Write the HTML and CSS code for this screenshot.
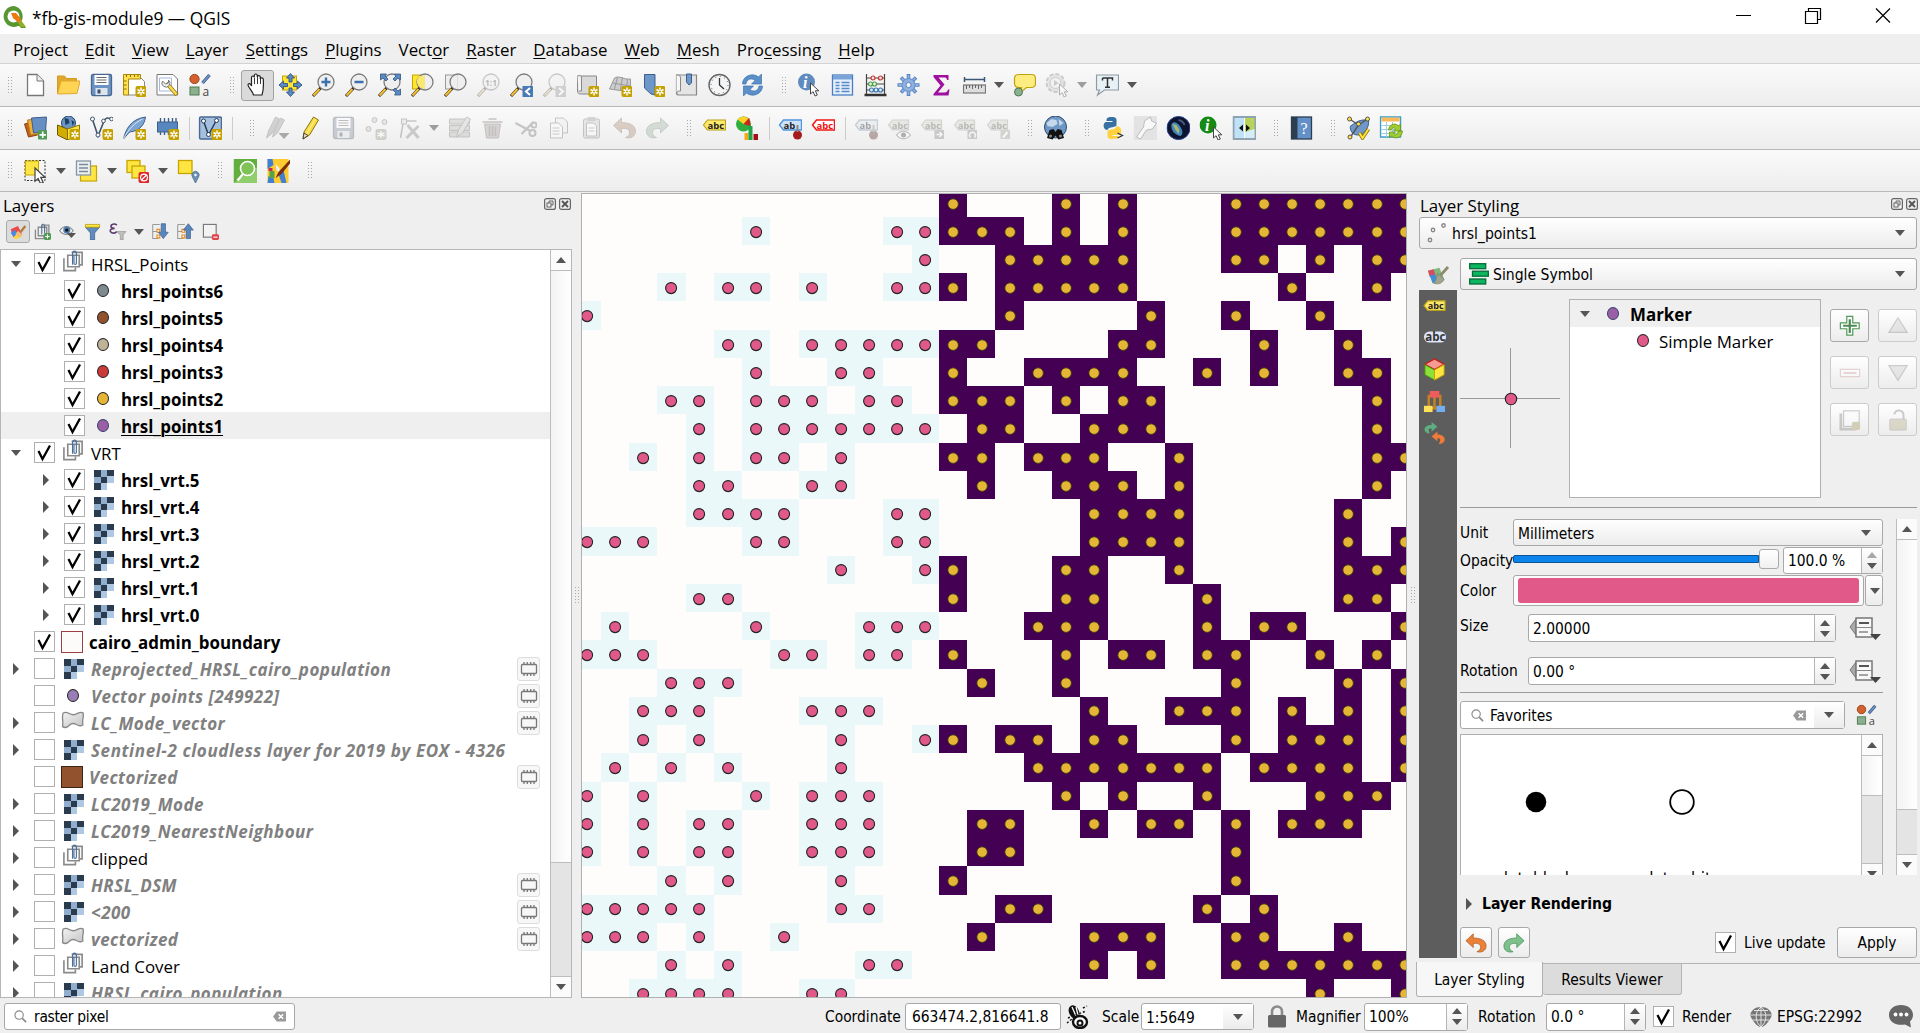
FILE: index.html
```html
<!DOCTYPE html>
<html lang="en">
<head>
<meta charset="utf-8">
<title>*fb-gis-module9 — QGIS</title>
<link rel="stylesheet" href="styles.css">
</head>
<body>
<svg class="defs" aria-hidden="true">
<defs>
<linearGradient id="gPoly" x1="0" y1="0" x2="1" y2="1"><stop offset="0" stop-color="#f2f2f2"/><stop offset="1" stop-color="#c4c4c4"/></linearGradient>
<g id="badge"><rect x="13" y="13" width="11" height="11" rx="2" fill="#c4a000"/><path d="M18.5 14.5v8M15 16.5l7 4M22 16.5l-7 4" stroke="#fff" stroke-width="1.5"/><circle cx="18.5" cy="18.5" r="1" fill="#c4a000"/></g>
<g id="lens"><path d="M9.500 14.500L1.500 23" stroke="#222" stroke-width="3"/><path d="M8 16L2 22.500" stroke="#fbc02d" stroke-width="2"/><circle cx="14.500" cy="9" r="8" fill="#eee" fill-opacity=".8" stroke="#7c7c7c" stroke-width="1.300"/></g>
<g id="cursor"><path d="M0 0v11l2.600-2.300 2 4.300 2.200-1-2-4.200h3.500z" fill="#fff" stroke="#444" stroke-width="1"/></g>
<g id="tag"><path d="M1 9l4-5h18v10H5z" fill="currentColor" stroke="#b5a018" stroke-width="1.200"/></g>
<symbol id="new" viewBox="0 0 24 24"><path d="M4 1.500h9.500L20 8v14.500H4z" fill="#fff" stroke="#777" stroke-width="1.300"/><path d="M13.500 1.500V8H20" fill="#eee" stroke="#777"/></symbol>
<symbol id="open" viewBox="0 0 24 24"><path d="M1 20V3h7l2 2.500h10V9" fill="#e0a92e" stroke="#d39b22"/><path d="M1 21L4.500 8h19L20.500 20.500z" fill="#ffd452" stroke="#e0a92e"/></symbol>
<symbol id="save" viewBox="0 0 24 24"><rect x="2" y="1.500" width="20" height="21" rx="1.500" fill="#6b93c4" stroke="#49688e" stroke-width="1.300"/><rect x="5" y="2" width="14" height="10" fill="#fff"/><path d="M7 4.500h10M7 7h10M7 9.500h10" stroke="#666" stroke-width="1.100"/><rect x="6" y="15" width="12" height="7" fill="#dce4ee"/><rect x="8" y="16.500" width="3" height="4" fill="#3a5070"/></symbol>
<symbol id="layout" viewBox="0 0 24 24"><path d="M5 4h12.500L22 8.500V22H5z" fill="#fff" stroke="#888"/><path d="M1 1.500h17v4.500H6V22H1z" fill="#ffe04d" stroke="#a8870c"/><path d="M4 2v2M8 2v2M12 2v2M15.500 2v2M1.500 8H4M1.500 12H4M1.500 16H4" stroke="#8c6d00"/><use href="#badge"/></symbol>
<symbol id="layman" viewBox="0 0 24 24"><path d="M1.500 1.500h16l4.500 4.500v16H1.500z" fill="#fff" stroke="#777"/><path d="M4 5h12v13H4z" fill="none" stroke="#a3b8dc"/><path d="M11 10l10.500 12" stroke="#8d7310" stroke-width="4"/><path d="M12 11l9 10.500" stroke="#fbdb4e" stroke-width="2.500"/><path d="M7 8l3 3 3-1 0-3a4 4 0 1 1-6 1z" fill="#eee" stroke="#777"/></symbol>
<symbol id="style" viewBox="0 0 24 24"><circle cx="6" cy="6" r="4.600" fill="#d4602f" stroke="#99431c"/><path d="M14 10l7-8" stroke="#3f6190" stroke-width="3.400"/><path d="M14 10l7-8" stroke="#7397c7" stroke-width="1.500"/><rect x="1.500" y="14" width="9" height="8" fill="#8bb08f" stroke="#4e7a53"/><text x="14" y="22.500" font-size="12" font-family="Open Sans, sans-serif" fill="#444">a</text></symbol>
<symbol id="hand" viewBox="0 0 24 24"><path d="M8 22c-1-4-5-7-5.500-10C2.500 10 5 10 6 13V4.500c0-2 2.600-2 2.800 0V2.500c.2-2 2.800-2 3 0V4c.3-2 2.800-1.700 3 0v2c.4-1.800 2.800-1.500 3 .3C18 13 18.500 16 16.500 22z" fill="#fff" stroke="#222" stroke-width="1.200"/><path d="M9 5v6M12 4v7M15 5v6" stroke="#222" stroke-width=".9"/></symbol>
<symbol id="pan" viewBox="0 0 24 24"><rect x="4" y="3" width="14" height="14" fill="#ffe630" stroke="#c7a500"/><path d="M12 .5l4 4.500h-2.500v4h-3V5H8zM12 23.500l4-4.500h-2.500v-4h-3v4H8zM.5 12L5 8v2.500h4v3H5V16zM23.500 12L19 8v2.500h-4v3h4V16z" fill="#5b8ac4" stroke="#31567f" stroke-width=".9"/></symbol>
<symbol id="zin" viewBox="0 0 24 24"><use href="#lens"/><path d="M14.500 4.500v9M10 9h9" stroke="#3d70ae" stroke-width="2.400"/></symbol>
<symbol id="zout" viewBox="0 0 24 24"><use href="#lens"/><path d="M10 9h9" stroke="#3d70ae" stroke-width="2.400"/></symbol>
<symbol id="zfull" viewBox="0 0 24 24"><use href="#lens"/><path d="M3 1h6L7.500 3l3 3-2 2-3-3L3 7zM23 1h-6l1.500 2-3 3 2 2 3-3L23 7zM23 22h-6l1.500-2-3-3 2-2 3 3L23 16z" fill="#5b8ac4" stroke="#31567f" stroke-width=".8"/></symbol>
<symbol id="zsel" viewBox="0 0 24 24"><rect x="2" y="2" width="12" height="14" fill="#ffe630" stroke="#c7a500"/><use href="#lens"/><path d="M9 3h5v12h-3a7 7 0 0 1-2-12z" fill="#fbe96c"/></symbol>
<symbol id="zlay" viewBox="0 0 24 24"><rect x="2" y="2" width="12" height="14" fill="#eee" stroke="#999"/><use href="#lens"/></symbol>
<symbol id="znat" viewBox="0 0 24 24"><use href="#lens"/><text x="8.500" y="12.500" font-size="8.500" font-weight="700" font-family="Open Sans, sans-serif" fill="#555">1:1</text></symbol>
<symbol id="zlast" viewBox="0 0 24 24"><use href="#lens"/><rect x="13" y="13" width="11" height="11" fill="#4a7ab5"/><path d="M20.500 15l-4 3.500 4 3.500" fill="none" stroke="#fff" stroke-width="2"/></symbol>
<symbol id="znext" viewBox="0 0 24 24"><use href="#lens"/><rect x="13" y="13" width="11" height="11" fill="#999"/><path d="M16.500 15l4 3.500-4 3.500" fill="none" stroke="#fff" stroke-width="2"/></symbol>
<symbol id="map" viewBox="0 0 24 24"><path d="M2 3h19v18H5c-3 0-3-2-3-3z" fill="#d9d9d9" stroke="#888"/><path d="M2 3c3-1 4 0 4 2v13H3" fill="#f3f3f3" stroke="#888"/><use href="#badge"/></symbol>
<symbol id="map3d" viewBox="0 0 24 24"><path d="M6 5c5-3 9 2 16 1v13L1 16z" fill="#ccc" stroke="#999"/><path d="M4 10l18 3M9 4L6 16M14 4l-2 13M19 6l-1 12" stroke="#999" fill="none"/><use href="#badge"/></symbol>
<symbol id="bkm" viewBox="0 0 24 24"><path d="M3 1.500h10.500V22l-4-1L3 15z" fill="#6d97c9" stroke="#3c5f8c"/><use href="#badge"/></symbol>
<symbol id="bkms" viewBox="0 0 24 24"><path d="M2 2h20v20H4c-2 0-2-1-2-3z" fill="#e4e4e4" stroke="#888" stroke-width="1.200"/><path d="M2 2c3 0 4 1 4 3v13c-2 0-4 0-4 3" fill="#f7f7f7" stroke="#888"/><path d="M12 1h5v9l-2.500 2L12 9z" fill="#6d97c9" stroke="#3c5f8c"/></symbol>
<symbol id="clock" viewBox="0 0 24 24"><circle cx="12" cy="12" r="10.500" fill="#f3f5f6" stroke="#666" stroke-width="1.400"/><path d="M12 5v7l4.500 4" fill="none" stroke="#333" stroke-width="1.300"/><circle cx="12" cy="12" r="8.500" fill="none" stroke="#555" stroke-dasharray="1 3.450"/></symbol>
<symbol id="refresh" viewBox="0 0 24 24"><path d="M2 11C2 3 12-1 18 4l3-3v10H11l3.500-3.500C11 4.500 6 6 5.500 11z" fill="#5b8fca" stroke="#4073ad" stroke-width=".7"/><path d="M22 13c0 8-10 12-16 7l-3 3V13h10l-3.500 3.500C13 19.500 18 18 18.500 13z" fill="#5b8fca" stroke="#4073ad" stroke-width=".7"/></symbol>
<symbol id="ident" viewBox="0 0 24 24"><circle cx="9" cy="9" r="8.500" fill="#5f8bbf"/><text x="5.500" y="15" font-size="16" font-style="italic" font-weight="700" font-family="Liberation Serif, serif" fill="#fff">i</text><use href="#cursor" transform="translate(13 10)"/></symbol>
<symbol id="table" viewBox="0 0 24 24"><rect x="2" y="2" width="20" height="20" fill="#e6effa" stroke="#4b7fc0" stroke-width="1.300"/><rect x="2.500" y="2.500" width="19" height="4" fill="#7ba5d8"/><path d="M5 9.500h4M5 12.500h4M5 15.500h4M5 18.500h4M11 9.500h8M11 12.500h8M11 15.500h8M11 18.500h8" stroke="#5a8aca" stroke-width="1.300"/></symbol>
<symbol id="abacus" viewBox="0 0 24 24"><path d="M3 1v20M21 1v20M3 5h18M3 11h18M3 17h18" stroke="#444" stroke-width="1.200"/><path d="M1 22h22" stroke="#333" stroke-width="2.500"/><g fill="#fbe3e3" stroke="#c3342c" stroke-width="1.200"><circle cx="9.500" cy="5" r="2"/><circle cx="17" cy="5" r="2"/></g><g fill="#e5f5e3" stroke="#4a9a46" stroke-width="1.200"><circle cx="7" cy="11" r="2"/><circle cx="11" cy="11" r="2"/></g><g fill="#e3edf8" stroke="#3a74b0" stroke-width="1.200"><circle cx="8" cy="17" r="2"/><circle cx="12.500" cy="17" r="2"/><circle cx="17" cy="17" r="2"/></g></symbol>
<symbol id="gear" viewBox="0 0 24 24"><path d="M12 1v22M1 12h22M4.500 4.500l15 15M19.500 4.500l-15 15" stroke="#5584c4" stroke-width="3.600"/><path d="M12 2v20M2 12h20M5.200 5.200l13.600 13.600M18.800 5.200L5.200 18.800" stroke="#8fb1de" stroke-width="1.800"/><circle cx="12" cy="12" r="6.500" fill="#8fb1de" stroke="#6b95d0" stroke-width="1.200"/><circle cx="12" cy="12" r="2.600" fill="#f3f3f3" stroke="#5584c4"/></symbol>
<symbol id="sigma" viewBox="0 0 24 24"><path d="M4 2h15v5h-1.500c-.3-2-1-2.500-3-2.500H9l6 7-6.500 8H15c2 0 3-1 3.500-3H20l-1 6H4v-1.500l7-8.500-7-8.500z" fill="#a010a0"/></symbol>
<symbol id="ruler" viewBox="0 0 24 24"><path d="M2 6.500h20M2 4v5M22 4v5" stroke="#3b5676" stroke-width="1.500"/><rect x="1" y="12" width="22" height="8" fill="#ddd" stroke="#777" stroke-width="1.200"/><path d="M4 12v4M7 12v3M10 12v4M13 12v3M16 12v4M19 12v3" stroke="#666"/></symbol>
<symbol id="tip" viewBox="0 0 24 24"><path d="M6 1.500h13c2.500 0 4 1.500 4 4v5c0 2-1.500 4-4 4h-5l-6 5 1-5H6c-2.500 0-4-2-4-4v-5c0-2.500 1.500-4 4-4z" fill="#fdec80" stroke="#bfa20f" stroke-width="1.200"/><circle cx="6" cy="19" r="4" fill="#8bb08f" stroke="#4e7a53"/></symbol>
<symbol id="action" viewBox="0 0 24 24"><circle cx="10" cy="10" r="9" fill="#ccc" stroke="#888" stroke-width="2" stroke-dasharray="4 2"/><circle cx="10" cy="10" r="5.500" fill="#eee" stroke="#888"/><path d="M8.500 7l4.500 3-4.500 3z" fill="#888"/><use href="#cursor" transform="translate(14 11)"/></symbol>
<symbol id="text" viewBox="0 0 24 24"><path d="M1 2h22v15H9l-7 5 2-5H1z" fill="#e8f1f5" stroke="#8c9ba3" stroke-width="1.200"/><path d="M7 5h10v2.500M7 7.500V5M12 5v9M9.500 14.200h5" fill="none" stroke="#333" stroke-width="1.500"/></symbol>
<symbol id="dsm" viewBox="0 0 24 24"><path d="M1 8l10-3 3 14-9 2z" fill="#c0601b" stroke="#8b4210"/><path d="M4 4l10-1 2 15-9 1z" fill="#f1b13b" stroke="#b67a13"/><path d="M8 2l15-1 -1 15-12 1z" fill="#668fc4" stroke="#3c5f8c"/><rect x="14.500" y="14" width="9.500" height="9.500" rx="1" fill="#4f9a55"/><path d="M19.200 15.500v6.500M16 18.800h6.500" stroke="#fff" stroke-width="1.700"/></symbol>
<symbol id="gpkg" viewBox="0 0 24 24"><circle cx="12" cy="7" r="7" fill="#6d95c4" stroke="#28476d"/><path d="M8 2l4 1 1 4-4 2zM15 4l3 2-2 4z" fill="#1e3d63"/><path d="M1 9l10 4v11L1 19z" fill="#d2ac00" stroke="#6c5900"/><path d="M11 13l12-4v10l-12 5z" fill="#ffe541" stroke="#8a7300"/><use href="#badge"/></symbol>
<symbol id="shp" viewBox="0 0 24 24"><path d="M3 3.500L8.500 20 15 4c2-3 4-2 7-1" fill="none" stroke="#41566b" stroke-width="1.600"/><g fill="#fff" stroke="#41566b"><circle cx="3" cy="3" r="2"/><circle cx="14" cy="5" r="1.800"/><circle cx="22" cy="3" r="1.800"/><circle cx="8.500" cy="19" r="2"/></g><use href="#badge"/></symbol>
<symbol id="feather" viewBox="0 0 24 24"><path d="M1 23C3 14 8 3 23 1c-1 7-5 14-16 15z" fill="#7fa6d2" stroke="#3c5f8c"/><path d="M1 23C6 13 12 7 20 3" fill="none" stroke="#dbe7f4"/><use href="#badge"/></symbol>
<symbol id="chip" viewBox="0 0 24 24"><path d="M5 2v17M9 2v17M13 2v17M17 2v17M20.500 2v17" stroke="#3c5f8c" stroke-width="1.400"/><rect x="2" y="6" width="20" height="10" fill="#5887bf" stroke="#3c5f8c"/><use href="#badge"/></symbol>
<symbol id="virt" viewBox="0 0 24 24"><rect x="1" y="1" width="22" height="22" rx="1.500" fill="#a5bfde" stroke="#4a6a92" stroke-width="1.500"/><path d="M5 5l5 14 8-15" fill="none" stroke="#253c57" stroke-width="1.500"/><g fill="#fff" stroke="#253c57"><circle cx="5" cy="5" r="2"/><circle cx="18" cy="4.500" r="2"/><circle cx="10" cy="18.500" r="2"/></g><use href="#badge"/></symbol>
<symbol id="pens" viewBox="0 0 24 24"><path d="M1 22l2-7L10 1l4 2-7 14zM7 21l2-7 6-12 4 2-7 13z" fill="#999" stroke="#777"/><path d="M13 17h11l-5.500 6z" fill="#333"/></symbol>
<symbol id="pen" viewBox="0 0 24 24"><path d="M4.500 23l1-7L15 1l5 3-9 15z" fill="#f8dc45" stroke="#8a7310"/><path d="M17 3L8 18" stroke="#fff59d"/><path d="M4.500 23l1-6 4 2.500z" fill="#f1dfb4" stroke="#444"/></symbol>
<symbol id="pts" viewBox="0 0 24 24"><g fill="#ccc" stroke="#777"><circle cx="4" cy="13" r="2.500"/><circle cx="10" cy="4" r="2.500"/><circle cx="20" cy="6" r="2.500"/></g><rect x="11" y="13" width="11" height="11" rx="2" fill="#a39a72"/><path d="M16.500 15v7M13 17l7 3M20 17l-7 3" stroke="#fff" stroke-width="1.400"/></symbol>
<symbol id="vert" viewBox="0 0 24 24"><path d="M3 22L6 5h13" stroke="#777" stroke-width="1.500" fill="none"/><path d="M10 9l11 13M21 10L9 22" stroke="#888" stroke-width="3" fill="none"/><rect x="4" y="3" width="5" height="5" fill="#ddd" stroke="#777"/></symbol>
<symbol id="attr" viewBox="0 0 24 24"><path d="M2 3h20v5H2zM2 9.500h20v5H2zM2 16h20v5H2z" fill="#b9bda4" stroke="#777"/><path d="M9 21l2-7L19 1l4 2-8 14z" fill="#ccc" stroke="#777"/></symbol>
<symbol id="trash" viewBox="0 0 24 24"><path d="M4 8h16l-2 14H6z" fill="#c79b9b" stroke="#8a6a6a"/><path d="M2 6h20M8 3h8M9 10v10M12 10v10M15 10v10" stroke="#8a6a6a" stroke-width="1.600"/></symbol>
<symbol id="cut" viewBox="0 0 24 24"><path d="M2 7l15 8M8 18l12-12" stroke="#777" stroke-width="2.200"/><circle cx="19" cy="17" r="3" fill="none" stroke="#777" stroke-width="2"/><circle cx="20.500" cy="9" r="2.600" fill="none" stroke="#777" stroke-width="2"/></symbol>
<symbol id="copy" viewBox="0 0 24 24"><path d="M9 2h8l4 4v11H9z" fill="#eee" stroke="#777"/><path d="M4 7h8l4 4v11H4z" fill="#fff" stroke="#777"/><path d="M6 12h7M6 15h7M6 18h7" stroke="#888"/></symbol>
<symbol id="paste" viewBox="0 0 24 24"><rect x="4" y="3" width="16" height="19" rx="1.500" fill="#ccc" stroke="#777"/><path d="M7 7h7l3 3v10H7z" fill="#fff" stroke="#777"/><rect x="8" y="1" width="8" height="4" fill="#999"/><path d="M9 12h6M9 15h6" stroke="#888"/></symbol>
<symbol id="undo" viewBox="0 0 24 24"><path d="M9 2L1 9.500l8 7.500v-4.500c6-.5 8 1 8 4.500 0 2-1.500 3.500-4 4.500 6 1.500 10-1.500 10-6.500 0-5-5-8.500-14-8.500z" fill="currentColor" stroke="#a8602c" stroke-width=".8"/></symbol>
<symbol id="redo" viewBox="0 0 24 24"><path d="M15 2l8 7.500-8 7.500v-4.500c-6-.5-8 1-8 4.500 0 2 1.500 3.500 4 4.500-6 1.500-10-1.500-10-6.500 0-5 5-8.500 14-8.500z" fill="currentColor" stroke="#3d8f55" stroke-width=".8"/></symbol>
<symbol id="lab" viewBox="0 0 24 24"><use href="#tag" color="#ffe96a"/><text x="5" y="12.500" font-size="9.500" font-weight="700" font-family="Open Sans, sans-serif" fill="#222">abc</text></symbol>
<symbol id="diag" viewBox="0 0 24 24"><circle cx="8" cy="8" r="7.500" fill="#2fae3f"/><path d="M8 8V.5l6 2L15 10z" fill="#c9251c"/><path d="M8 8L2 3.500C4 1 9-.5 13 2.500z" fill="#ffd42a"/><path d="M9 17h4v7H9z" fill="#f5a81c"/><path d="M13 10h4v14h-4z" fill="#1ea64a"/><path d="M18 18h4.500v6H18z" fill="#a31212"/></symbol>
<symbol id="labpin" viewBox="0 0 24 24"><path d="M1 9l4-5h18v10H5z" fill="#cfe3f8" stroke="#5096dd" stroke-width="1.400"/><text x="5" y="12.500" font-size="9.500" font-weight="700" font-family="Open Sans, sans-serif" fill="#222">ab</text><circle cx="19" cy="19" r="4.500" fill="#a61b1b"/><path d="M19 16V9" stroke="#888" stroke-width="2"/></symbol>
<symbol id="labred" viewBox="0 0 24 24"><path d="M1 9l4-5h18v10H5z" fill="#fff" stroke="#f01818" stroke-width="1.500"/><text x="5" y="12.500" font-size="9.500" font-weight="700" font-family="Open Sans, sans-serif" fill="#e11">abc</text></symbol>
<symbol id="labx" viewBox="0 0 24 24"><path d="M1 9l4-5h16v10H5z" fill="#d8d3ac" stroke="#999" stroke-width="1.200"/><text x="4.500" y="12.500" font-size="9" font-weight="700" font-family="Open Sans, sans-serif" fill="#555">abc</text><rect x="14" y="14" width="9.500" height="9" fill="#888"/><path d="M16 18.500h5M19 16l2.500 2.500L19 21" fill="none" stroke="#fff" stroke-width="1.300"/></symbol>
<symbol id="labeye" viewBox="0 0 24 24"><path d="M1 9l4-5h16v10H5z" fill="#d8d3ac" stroke="#999" stroke-width="1.200"/><text x="4.500" y="12.500" font-size="9" font-weight="700" font-family="Open Sans, sans-serif" fill="#555">abc</text><path d="M9 19c4-5 10-5 14 0-4 5-10 5-14 0z" fill="#fff" stroke="#666" stroke-width="1.200"/><circle cx="16" cy="19" r="2.500" fill="#444"/></symbol>
<symbol id="labrot" viewBox="0 0 24 24"><path d="M1 9l4-5h16v10H5z" fill="#d8d3ac" stroke="#999" stroke-width="1.200"/><text x="4.500" y="12.500" font-size="9" font-weight="700" font-family="Open Sans, sans-serif" fill="#555">abc</text><rect x="14" y="14" width="9.500" height="9" fill="#888"/><path d="M17 21.500a3 3 0 1 1 4 0" fill="none" stroke="#fff" stroke-width="1.500"/></symbol>
<symbol id="labedit" viewBox="0 0 24 24"><path d="M1 9l4-5h16v10H5z" fill="#d8d3ac" stroke="#999" stroke-width="1.200"/><text x="4.500" y="12.500" font-size="9" font-weight="700" font-family="Open Sans, sans-serif" fill="#555">abc</text><rect x="14" y="14" width="9.500" height="9" fill="#aaa27a"/><path d="M16.500 21.500l4.500-5.500" stroke="#fff" stroke-width="2"/></symbol>
<symbol id="binoc" viewBox="0 0 24 24"><circle cx="12" cy="11" r="11" fill="#6f97c4" stroke="#2d4c70"/><path d="M3 7l5-4 5 1 1 4-5 3-5-1zM15 3l5 4-4 3z" fill="#c5d8ec"/><path d="M3.500 22l2.500-8 4-1 2 3 2-3 4 1 2.500 8-5.500 1.500-3-4-3 4z" fill="#111"/><circle cx="7" cy="20" r="1.500" fill="#888"/><circle cx="17" cy="20" r="1.500" fill="#888"/></symbol>
<symbol id="py" viewBox="0 0 24 24"><path d="M11 1c6 0 5 2 5 8 0 3-8 1-9 5-5 0-5-8-1-8h6V5H6c0-3 1-4 5-4z" fill="#3771a2"/><path d="M12 23c-6 0-5-2-5-7 0-4 9-1 9-6 6 0 6 9 2 9h-6v1h6c0 2-1 3-6 3z" fill="#ffd13e"/><path d="M17 17l5 2.500-5 2.500" fill="none" stroke="#333" stroke-width="1.300"/></symbol>
<symbol id="plug" viewBox="0 0 24 24"><rect width="24" height="24" fill="#e3e3e3"/><path d="M3 21l7-10 1-6 6-4 1 4 5 2-4 6-6 1-6 9z" fill="#f8f8f8" stroke="#bbb"/></symbol>
<symbol id="earth" viewBox="0 0 24 24"><circle cx="12" cy="12" r="11.500" fill="#0d1430" stroke="#27408f" stroke-width="1"/><path d="M5 8c3-4 7 0 9 3s3 7 0 9C8 19 4 14 5 8z" fill="#4384bb"/><path d="M6 8l4 1 3 5-1 4-3-4z" fill="#a8b66e"/><path d="M12 4a8 8 0 0 1 6 5" fill="none" stroke="#4b5577" stroke-width="2"/></symbol>
<symbol id="ginfo" viewBox="0 0 24 24"><circle cx="8.500" cy="9" r="8.500" fill="#158a17"/><text x="5.500" y="15" font-size="16" font-style="italic" font-weight="700" font-family="Liberation Serif, serif" fill="#fff">i</text><use href="#cursor" transform="translate(14 11)"/></symbol>
<symbol id="swipe" viewBox="0 0 24 24"><rect x="0" y="0" width="24" height="24" fill="#8fa3b1"/><rect x="2" y="2" width="10" height="20" fill="#bfe2f8"/><rect x="12" y="2" width="10" height="20" fill="#b9d258"/><path d="M12 16l10-3v9H12z" fill="#d4edf8"/><path d="M12 2v20" stroke="#fff"/><path d="M10.500 8.500L6.500 12l4 3.500zM13.500 8.500l4 3.500-4 3.500z" fill="#111"/></symbol>
<symbol id="help" viewBox="0 0 24 24"><rect x="2" y="1" width="20" height="22" fill="#6490c8" stroke="#2c3e50" stroke-width="1.300"/><rect x="2" y="1" width="6" height="22" fill="#2c3e50"/><text x="11" y="18" font-size="16" font-family="Liberation Serif, serif" fill="#fff">?</text></symbol>
<symbol id="topo" viewBox="0 0 24 24"><path d="M4 10c4-2 7-7 18-6 1 6-3 15-11 15C6 19 3 14 4 10z" fill="#6f98c9" stroke="#3b5f8c"/><path d="M3 3l9 6 9-6M12 9L4 21" stroke="#555" fill="none" stroke-width="1.400"/><g fill="#ffe541" stroke="#555"><circle cx="3" cy="3" r="2"/><circle cx="21" cy="3" r="2"/><circle cx="12" cy="8" r="2"/><circle cx="3.500" cy="21" r="2"/></g><path d="M13 17l3 5 6-9" fill="none" stroke="#8a7300" stroke-width="3.500"/><path d="M13 17l3 5 6-9" fill="none" stroke="#ffe541" stroke-width="1.800"/></symbol>
<symbol id="tref" viewBox="0 0 24 24"><rect x="1" y="1" width="20" height="20" fill="#fff" stroke="#3c9fc8" stroke-width="1.500"/><rect x="2" y="1.500" width="18" height="4" fill="#f9b958"/><path d="M2 9.500h18M2 13.500h18M2 17.500h18M7 6v15M13 6v15" stroke="#9dd0e6"/><path d="M9 14c1-7 8-7 10-4l2-2v7h-7l2-2c-2-2-4-1-4 1zM23 15c-1 8-8 8-11 5l-2 2v-6h6l-2 2c2 2 4 0 5-3z" fill="#9fce2f" stroke="#679315" stroke-width=".8"/></symbol>
<symbol id="sel" viewBox="0 0 24 24"><rect x="1.500" y="1.500" width="20" height="20" fill="none" stroke="#333" stroke-dasharray="2 1.500"/><rect x="2" y="2" width="13" height="14" fill="#ffe541" stroke="#c7a500"/><use href="#cursor" transform="translate(11.500 9) scale(1.200)"/></symbol>
<symbol id="selform" viewBox="0 0 24 24"><rect x="6" y="7" width="16" height="15" fill="#ffe541" stroke="#c7a500" stroke-width="1.200"/><rect x="2" y="2" width="14" height="14" fill="#eceff1" stroke="#8497a5" stroke-width="1.300"/><path d="M4.500 5.500h9M4.500 9h9M4.500 12.500h9" stroke="#7b8b97" stroke-width="1.400"/></symbol>
<symbol id="desel" viewBox="0 0 24 24"><rect x="1.500" y="1.500" width="13" height="12" fill="#ffe541" stroke="#c7a500" stroke-width="1.300"/><rect x="6.500" y="7" width="13" height="12" fill="#ffe541" stroke="#c7a500" stroke-width="1.300"/><rect x="13" y="13" width="11" height="11" rx="2" fill="#dc2a2a"/><circle cx="18.500" cy="18.500" r="3.400" fill="none" stroke="#fff" stroke-width="1.200"/><path d="M16 21l5-5" stroke="#fff" stroke-width="1.200"/></symbol>
<symbol id="selloc" viewBox="0 0 24 24"><rect x="2" y="1.500" width="13.500" height="13" fill="#ffe541" stroke="#c7a500" stroke-width="1.300"/><path d="M19 24l-3-6a3.600 3.600 0 1 1 6 0z" fill="#6f93b5" stroke="#4a6b8c" stroke-width=".8"/><circle cx="19" cy="16" r="1.200" fill="#fff"/></symbol>
<symbol id="osmfind" viewBox="0 0 24 24"><rect width="24" height="24" fill="#62ae3f"/><path d="M0 24L24 8v16z" fill="#8fce6a"/><circle cx="14" cy="9.500" r="7" fill="#7fc255" stroke="#fff" stroke-width="1.600"/><path d="M9.500 15L4 21.500" stroke="#fff" stroke-width="2.400"/></symbol>
<symbol id="osm" viewBox="0 0 24 24"><rect x="1" width="21" height="24" fill="#ffcb2e"/><path d="M1 0h5l1 6-6 4zM12 15l5-4 3 13h-5zM2 17l5 2 1 5H1z" fill="#3f80d2"/><path d="M3 12h5v7H3z" fill="#56a545"/><path d="M2 9h4v3H2z" fill="#c22f5b"/><path d="M9 5l4 4v5l-3-3z" fill="#e8eef8"/><path d="M24 0L12 13l-3 6 6-4L24 4z" fill="#7c2d10"/></symbol>
<symbol id="brush" viewBox="0 0 24 24"><path d="M2 8l12-3 5 12c-4 5-9 4-12 4z" fill="#7fb87a"/><path d="M2 8l6-1.500 2 7-6 1z" fill="#d94b5f"/><path d="M4 13l6-1 1 7-4 2z" fill="#3d8fd8"/><path d="M12 11l7 6c-3 6-8 5-11 4 2-2 3-5 4-10z" fill="#9fa58e" stroke="#777b6b" stroke-width=".7"/><path d="M15 13l8-9" stroke="#8e8b70" stroke-width="3"/></symbol>
<symbol id="brushb" viewBox="0 0 24 24"><path d="M1 8l11-5 6 12c-4 6-10 6-13 5z" fill="#e84a4a"/><path d="M1 13l7-4 4 8-6 3z" fill="#3f8ae6"/><path d="M4 21l8-8 7 4c-5 6-11 6-15 4z" fill="#ffd43a"/><path d="M12 10l7 6-4 4-7-5z" fill="#f0bd80"/><path d="M16 12l7-9" stroke="#b47a38" stroke-width="3.500"/></symbol>
<symbol id="group" viewBox="0 0 24 24"><path d="M2 9v13h12v-3M6 6v12h12V6zM10 3h11v13h-3" fill="none" stroke="#8a8a8a" stroke-width="1.700"/><path d="M11 16V4c0-3 4-3 4 0v10c0 2-2.500 2-2.500 0V6" fill="none" stroke="#4a6f9c" stroke-width="1.200"/></symbol>
<symbol id="groupadd" viewBox="0 0 24 24"><path d="M2 9v13h12v-3M6 6v12h12V6zM10 3h11v13h-3" fill="none" stroke="#8a8a8a" stroke-width="1.900"/><path d="M11 16V4c0-3 4-3 4 0v10" fill="none" stroke="#3c5f8c" stroke-width="1.400"/><rect x="14" y="14" width="10" height="10" rx="2" fill="#4f9a55"/><path d="M19 16v6M16 19h6" stroke="#fff" stroke-width="1.500"/></symbol>
<symbol id="eye" viewBox="0 0 24 24"><path d="M1 11c5-8 14-8 19 0-5 7-14 7-19 0z" fill="#f5f5f5" stroke="#888" stroke-width="1.500"/><circle cx="11" cy="10" r="5" fill="#4f7fae"/><circle cx="11" cy="10" r="2.400" fill="#111"/><path d="M11 14h13l-6.500 7z" fill="#555"/></symbol>
<symbol id="filter" viewBox="0 0 24 24"><path d="M2 6h20l-7 8v10H9V14z" fill="#5f8bbf" stroke="#3c5f8c"/><path d="M2 2h20v4H2z" fill="#ffe541" stroke="#b09300"/></symbol>
<symbol id="eps" viewBox="0 0 24 24"><path d="M11 3C8 0 2 2 3 5c0 2 3 2.500 5 2.500C4 7.500 1 9 2 12c1 3 7 3 9 0" fill="none" stroke="#5e3a70" stroke-width="2.300"/><path d="M11 12h13l-4 5v7h-4v-7z" fill="#bdbdbd" stroke="#999"/></symbol>
<symbol id="expand" viewBox="0 0 24 24"><path d="M1 2h10M1 2v20h8M1 12h8" stroke="#999" fill="none" stroke-width="1.500"/><path d="M7 9h4v4H7zM7 17h4v4H7z" fill="#fff" stroke="#e88b1c" stroke-width="1.600"/><path d="M13 1h6v12h4l-7 9-7-9h4z" fill="#5887bf" stroke="#3c5f8c"/></symbol>
<symbol id="collapse" viewBox="0 0 24 24"><path d="M1 2h10M1 2v20h8M1 12h8" stroke="#999" fill="none" stroke-width="1.500"/><path d="M7 9h4v4H7zM7 17h4v4H7z" fill="#fff" stroke="#e88b1c" stroke-width="1.600"/><path d="M13 22h6V10h4l-7-9-7 9h4z" fill="#5887bf" stroke="#3c5f8c"/></symbol>
<symbol id="remove" viewBox="0 0 24 24"><rect x="2" y="2" width="18" height="18" fill="#f3f3f3" stroke="#777" stroke-width="1.600"/><rect x="14" y="16" width="10" height="8" rx="2" fill="#e0434a"/><path d="M16 20h6" stroke="#fff" stroke-width="1.600"/></symbol>
<symbol id="raster" viewBox="0 0 20 20"><rect width="20" height="20" fill="#aec7e3"/><path d="M0 0h7v7H0zM13 0h7v6h-7zM7 7h6v6H7zM0 13h7v7H0z" fill="#2b3b4e"/><path d="M7 0h6v7H7zM0 7h7v6H0z" fill="#7f9dbf" opacity=".6"/><path d="M13 13h7v7h-7z" fill="#fff"/></symbol>
<symbol id="poly" viewBox="0 0 24 20"><path d="M1.500 3.500c4-3.500 6 1.500 11 1.500 4 0 6-4 10-2 1.500 4-1.500 8 0 12.500-3 2.500-5 1-7.500-.5-4-2-6 0-8.500 2.500-2 1.500-4 1-5.500 0 1-5-1-9 .5-14z" fill="url(#gPoly)" stroke="#888" stroke-width="1.400"/></symbol>
<symbol id="check" viewBox="0 0 21 21"><path d="M4.500 9l4 8L16 3.500" fill="none" stroke="#000" stroke-width="2.300"/></symbol>
<symbol id="mem" viewBox="0 0 18 18"><path d="M4 2v14M7.300 2v14M10.700 2v14M14 2v14" stroke="#777" stroke-width="1.300"/><rect x="1.500" y="4.500" width="15" height="9" rx="1" fill="#f7f7f7" stroke="#777" stroke-width="1.300"/></symbol>
<symbol id="float" viewBox="0 0 12 12"><rect x=".6" y=".6" width="10.800" height="10.800" rx="2" fill="none" stroke="#666" stroke-width="1.200"/><path d="M5 5V3h4v4H7" fill="none" stroke="#666"/><rect x="3" y="5" width="4" height="4" fill="none" stroke="#666"/></symbol>
<symbol id="close" viewBox="0 0 12 12"><rect x=".6" y=".6" width="10.800" height="10.800" rx="2" fill="none" stroke="#666" stroke-width="1.200"/><path d="M3 3l6 6M9 3L3 9" stroke="#555" stroke-width="1.900"/></symbol>
<symbol id="search" viewBox="0 0 14 14"><circle cx="5.500" cy="5.500" r="4.500" fill="none" stroke="#888" stroke-width="1.200"/><path d="M9 9l4 4" stroke="#888" stroke-width="1.700"/></symbol>
<symbol id="clear" viewBox="0 0 14 12"><path d="M0 6l4-5.500h10v11H4z" fill="#999"/><path d="M6 3.500l5 5M11 3.500l-5 5" stroke="#fff" stroke-width="1.600"/></symbol>
<symbol id="cube" viewBox="0 0 24 24"><path d="M12 1l10 5.500L12 12 2 6.500z" fill="#f79a94" stroke="#c51f16" stroke-width="1.400"/><path d="M2 7l10 5.500V23L2 17.500z" fill="#8be03a" stroke="#4b8d14"/><path d="M22 7l-10 5.500V23l10-5.500z" fill="#ffe541" stroke="#c7a500"/></symbol>
<symbol id="tree" viewBox="0 0 24 24"><path d="M12 6v13M6 5v12M18 5v12M3 19h18" fill="none" stroke="#c58222" stroke-width="2.600"/><rect x="7" y="1" width="10" height="7" fill="#f05b5b"/><rect x="1" y="16.500" width="9" height="6.500" fill="#ffe15a"/><rect x="14" y="16.500" width="9" height="6.500" fill="#74aef0"/></symbol>
<symbol id="hist" viewBox="0 0 24 24"><path d="M9 0l6 5-6 5V7C6 6.500 5 7.500 7 12 0 12-1 3 9 3z" fill="#5fae80"/><path d="M15 10l-6 5 6 5v-3c3-.5 4 1 1.500 6C25 23 25 13 15 13z" fill="#ef7a3a"/></symbol>
<symbol id="halo" viewBox="0 0 26 16"><rect x="1" y="2" width="24" height="12" rx="6" fill="#dde4f8"/><text x="2.500" y="12" font-size="12.500" font-weight="700" font-family="Open Sans, sans-serif" fill="#333">abc</text></symbol>
<symbol id="ddef" viewBox="0 0 32 24"><path d="M1 11l6-8v16z" fill="#aaa" stroke="#777"/><rect x="7" y="2" width="16" height="19" fill="#f8f8f8" stroke="#777" stroke-width="1.500"/><path d="M10 7h10" stroke="#555" stroke-width="2"/><path d="M7 11.500h16" stroke="#888"/><path d="M10 16h9" stroke="#888" stroke-width="1.500"/><path d="M21 18h11l-5.500 6z" fill="#444"/></symbol>
</defs>
</svg>

<header class="titlebar">
  <svg class="logo" viewBox="0 0 24 24"><path d="M12 1a10.500 10.500 0 1 0 5 19.800l2 2.200h5l-5-6A10.500 10.500 0 0 0 12 1z" fill="#589632"/><circle cx="11.500" cy="11.500" r="6" fill="#fff"/><path d="M12 12l4-1 8 11h-5z" fill="#93b023"/><path d="M9 8h5l5 6-2 4-6-5z" fill="#ee7913"/></svg>
  <span class="title">*fb-gis-module9 — QGIS</span>
  <svg class="wc" width="156" height="18" viewBox="0 0 156 18"><path d="M0 8.500h15" stroke="#000"/><path d="M69.500 4.500h12v12h-12zM72.500 4.500v-3h12v11h-3" fill="none" stroke="#000" stroke-width="1.200"/><path d="M140 1.500l14 14M154 1.500l-14 14" stroke="#000" stroke-width="1.200"/></svg>
</header>

<nav class="menubar"><span>Pro<u>j</u>ect</span><span><u>E</u>dit</span><span><u>V</u>iew</span><span><u>L</u>ayer</span><span><u>S</u>ettings</span><span><u>P</u>lugins</span><span>Vect<u>o</u>r</span><span><u>R</u>aster</span><span><u>D</u>atabase</span><span><u>W</u>eb</span><span><u>M</u>esh</span><span>Pro<u>c</u>essing</span><span><u>H</u>elp</span></nav>

<div class="toolbar">
  <i class="grip"></i><svg><use href="#new"/></svg><svg><use href="#open"/></svg><svg><use href="#save"/></svg><svg><use href="#layout"/></svg><svg><use href="#layman"/></svg><svg><use href="#style"/></svg>
  <i class="grip"></i><span class="on"><svg><use href="#hand"/></svg></span><svg><use href="#pan"/></svg><svg><use href="#zin"/></svg><svg><use href="#zout"/></svg><svg><use href="#zfull"/></svg><svg><use href="#zsel"/></svg><svg><use href="#zlay"/></svg><svg class="off"><use href="#znat"/></svg><svg><use href="#zlast"/></svg><svg class="off"><use href="#znext"/></svg><svg><use href="#map"/></svg><svg><use href="#map3d"/></svg><svg><use href="#bkm"/></svg><svg><use href="#bkms"/></svg><svg><use href="#clock"/></svg><svg><use href="#refresh"/></svg>
  <i class="grip"></i><svg><use href="#ident"/></svg><svg><use href="#table"/></svg><svg><use href="#abacus"/></svg><svg><use href="#gear"/></svg><svg><use href="#sigma"/></svg><svg><use href="#ruler"/></svg><b class="dd"></b><svg><use href="#tip"/></svg><svg class="off"><use href="#action"/></svg><b class="dd dim"></b><svg><use href="#text"/></svg><b class="dd"></b>
</div>
<div class="toolbar">
  <i class="grip"></i><svg><use href="#dsm"/></svg><svg><use href="#gpkg"/></svg><svg><use href="#shp"/></svg><svg><use href="#feather"/></svg><svg><use href="#chip"/></svg><i class="sep"></i><svg><use href="#virt"/></svg><i class="sep"></i>
  <i class="grip"></i><svg class="off"><use href="#pens"/></svg><svg><use href="#pen"/></svg><svg class="off"><use href="#save"/></svg><svg class="off"><use href="#pts"/></svg><svg class="off"><use href="#vert"/></svg><b class="dd dim"></b><svg class="off"><use href="#attr"/></svg><svg class="off"><use href="#trash"/></svg><svg class="off"><use href="#cut"/></svg><svg class="off"><use href="#copy"/></svg><svg class="off"><use href="#paste"/></svg><svg class="off orange"><use href="#undo"/></svg><svg class="off green"><use href="#redo"/></svg>
  <i class="grip"></i><svg><use href="#lab"/></svg><svg><use href="#diag"/></svg><i class="sep"></i><svg><use href="#labpin"/></svg><svg><use href="#labred"/></svg><i class="sep"></i><svg class="off"><use href="#labpin"/></svg><svg class="off"><use href="#labeye"/></svg><svg class="off"><use href="#labx"/></svg><svg class="off"><use href="#labrot"/></svg><svg class="off"><use href="#labedit"/></svg>
  <i class="grip"></i><svg><use href="#binoc"/></svg><i class="grip"></i><svg><use href="#py"/></svg><svg><use href="#plug"/></svg><svg><use href="#earth"/></svg><svg><use href="#ginfo"/></svg><svg><use href="#swipe"/></svg><i class="grip"></i><svg><use href="#help"/></svg><i class="grip"></i><svg><use href="#topo"/></svg><svg><use href="#tref"/></svg>
</div>
<div class="toolbar third">
  <i class="grip"></i><svg><use href="#sel"/></svg><b class="dd"></b><svg><use href="#selform"/></svg><b class="dd"></b><svg><use href="#desel"/></svg><b class="dd"></b><svg><use href="#selloc"/></svg><i class="grip"></i><svg><use href="#osmfind"/></svg><svg><use href="#osm"/></svg><i class="grip"></i>
</div>

<main>
<section class="layers">
  <div class="dockhead"><span>Layers</span><svg><use href="#float"/></svg><svg><use href="#close"/></svg></div>
  <div class="ltools"><span class="on"><svg><use href="#brushb"/></svg></span><svg><use href="#groupadd"/></svg><svg><use href="#eye"/></svg><svg><use href="#filter"/></svg><svg><use href="#eps"/></svg><b class="dd"></b><svg><use href="#expand"/></svg><svg><use href="#collapse"/></svg><svg><use href="#remove"/></svg></div>
  <div class="treebox">
    <div class="tree">
      <div class="row"><i class="ex down"></i><i class="cb"><svg><use href="#check"/></svg></i><span class="ic"><svg class="grp"><use href="#group"/></svg></span><span class="lb">HRSL_Points</span></div>
      <div class="row sub"><i class="ex"></i><i class="cb"><svg><use href="#check"/></svg></i><span class="ic"><i class="dot slate"></i></span><span class="lb bold">hrsl_points6</span></div>
      <div class="row sub"><i class="ex"></i><i class="cb"><svg><use href="#check"/></svg></i><span class="ic"><i class="dot brown"></i></span><span class="lb bold">hrsl_points5</span></div>
      <div class="row sub"><i class="ex"></i><i class="cb"><svg><use href="#check"/></svg></i><span class="ic"><i class="dot tan"></i></span><span class="lb bold">hrsl_points4</span></div>
      <div class="row sub"><i class="ex"></i><i class="cb"><svg><use href="#check"/></svg></i><span class="ic"><i class="dot red"></i></span><span class="lb bold">hrsl_points3</span></div>
      <div class="row sub"><i class="ex"></i><i class="cb"><svg><use href="#check"/></svg></i><span class="ic"><i class="dot gold"></i></span><span class="lb bold">hrsl_points2</span></div>
      <div class="row sub current"><i class="ex"></i><i class="cb"><svg><use href="#check"/></svg></i><span class="ic"><i class="dot purple"></i></span><span class="lb bold"><u>hrsl_points1</u></span></div>
      <div class="row"><i class="ex down"></i><i class="cb"><svg><use href="#check"/></svg></i><span class="ic"><svg class="grp"><use href="#group"/></svg></span><span class="lb">VRT</span></div>
      <div class="row sub"><i class="ex right"></i><i class="cb"><svg><use href="#check"/></svg></i><span class="ic"><svg><use href="#raster"/></svg></span><span class="lb bold">hrsl_vrt.5</span></div>
      <div class="row sub"><i class="ex right"></i><i class="cb"><svg><use href="#check"/></svg></i><span class="ic"><svg><use href="#raster"/></svg></span><span class="lb bold">hrsl_vrt.4</span></div>
      <div class="row sub"><i class="ex right"></i><i class="cb"><svg><use href="#check"/></svg></i><span class="ic"><svg><use href="#raster"/></svg></span><span class="lb bold">hrsl_vrt.3</span></div>
      <div class="row sub"><i class="ex right"></i><i class="cb"><svg><use href="#check"/></svg></i><span class="ic"><svg><use href="#raster"/></svg></span><span class="lb bold">hrsl_vrt.2</span></div>
      <div class="row sub"><i class="ex right"></i><i class="cb"><svg><use href="#check"/></svg></i><span class="ic"><svg><use href="#raster"/></svg></span><span class="lb bold">hrsl_vrt.1</span></div>
      <div class="row sub"><i class="ex right"></i><i class="cb"><svg><use href="#check"/></svg></i><span class="ic"><svg><use href="#raster"/></svg></span><span class="lb bold">hrsl_vrt.0</span></div>
      <div class="row"><i class="ex"></i><i class="cb"><svg><use href="#check"/></svg></i><span class="ic"><i class="sw outline"></i></span><span class="lb bold near">cairo_admin_boundary</span></div>
      <div class="row"><i class="ex right"></i><i class="cb"></i><span class="ic"><svg><use href="#raster"/></svg></span><span class="lb ghost">Reprojected_HRSL_cairo_population</span><span class="mem"><svg><use href="#mem"/></svg></span></div>
      <div class="row"><i class="ex"></i><i class="cb"></i><span class="ic"><i class="dot violet"></i></span><span class="lb ghost">Vector points [249922]</span><span class="mem"><svg><use href="#mem"/></svg></span></div>
      <div class="row"><i class="ex right"></i><i class="cb"></i><span class="ic"><svg class="pol"><use href="#poly"/></svg></span><span class="lb ghost">LC_Mode_vector</span><span class="mem"><svg><use href="#mem"/></svg></span></div>
      <div class="row"><i class="ex right"></i><i class="cb"></i><span class="ic"><svg><use href="#raster"/></svg></span><span class="lb ghost wide">Sentinel-2 cloudless layer for 2019 by EOX - 4326</span></div>
      <div class="row"><i class="ex"></i><i class="cb"></i><span class="ic"><i class="sw filled"></i></span><span class="lb ghost near">Vectorized</span><span class="mem"><svg><use href="#mem"/></svg></span></div>
      <div class="row"><i class="ex right"></i><i class="cb"></i><span class="ic"><svg><use href="#raster"/></svg></span><span class="lb ghost">LC2019_Mode</span></div>
      <div class="row"><i class="ex right"></i><i class="cb"></i><span class="ic"><svg><use href="#raster"/></svg></span><span class="lb ghost">LC2019_NearestNeighbour</span></div>
      <div class="row"><i class="ex right"></i><i class="cb"></i><span class="ic"><svg class="grp"><use href="#group"/></svg></span><span class="lb">clipped</span></div>
      <div class="row"><i class="ex right"></i><i class="cb"></i><span class="ic"><svg><use href="#raster"/></svg></span><span class="lb ghost">HRSL_DSM</span><span class="mem"><svg><use href="#mem"/></svg></span></div>
      <div class="row"><i class="ex right"></i><i class="cb"></i><span class="ic"><svg><use href="#raster"/></svg></span><span class="lb ghost">&lt;200</span><span class="mem"><svg><use href="#mem"/></svg></span></div>
      <div class="row"><i class="ex right"></i><i class="cb"></i><span class="ic"><svg class="pol"><use href="#poly"/></svg></span><span class="lb ghost">vectorized</span><span class="mem"><svg><use href="#mem"/></svg></span></div>
      <div class="row"><i class="ex right"></i><i class="cb"></i><span class="ic"><svg class="grp"><use href="#group"/></svg></span><span class="lb">Land Cover</span></div>
      <div class="row"><i class="ex right"></i><i class="cb"></i><span class="ic"><svg><use href="#raster"/></svg></span><span class="lb ghost">HRSL_cairo_population</span></div>
    </div>
    <div class="scroll"><i class="up"></i><i class="thumb"></i><i class="track"></i><i class="dn"></i></div>
  </div>
</section>

<div class="split"><i></i></div>
<section class="canvas"><svg id="mapview" width="824" height="803" viewBox="582 194 824 803"></svg></section>
<div class="split right"><i></i></div>

<section class="styling">
  <div class="dockhead"><span>Layer Styling</span><svg><use href="#float"/></svg><svg><use href="#close"/></svg></div>
  <div class="combo layer"><svg width="20" height="20" viewBox="0 0 20 20"><g fill="#fff" stroke="#888" stroke-width="1.400"><circle cx="3" cy="17" r="1.700"/><circle cx="6" cy="7" r="1.700"/><circle cx="16.500" cy="2.500" r="1.700"/></g></svg><span>hrsl_points1</span><b class="dd"></b></div>
  <div class="cols">
    <div class="side">
      <div class="first"><svg><use href="#brush"/></svg></div>
      <div class="dark"><svg><use href="#lab"/></svg><svg class="halo"><use href="#halo"/></svg><svg><use href="#cube"/></svg><svg><use href="#tree"/></svg><svg><use href="#hist"/></svg></div>
    </div>
    <div class="props">
      <div class="combo sym"><svg width="20" height="22" viewBox="0 0 20 22"><g fill="#0cb55f" stroke="#066b37" stroke-width="1.300"><rect x=".7" y=".7" width="16" height="5"/><rect x="3.500" y="8.200" width="15.800" height="5"/><rect x=".7" y="16" width="16" height="5"/></g></svg><span>Single Symbol</span><b class="dd"></b></div>
      <div class="symrow">
        <svg class="cross" width="100" height="101" viewBox="0 0 100 101"><path d="M50.500 0v100M0 50.500h100" stroke="#999"/><circle cx="51" cy="51" r="5.700" fill="#e15989" stroke="#232323" stroke-width="1.100"/></svg>
        <div class="symtree"><div class="srow hd"><i class="ex down"></i><i class="dot purple"></i><span class="bold">Marker</span></div><div class="srow ch"><i class="dot pink"></i><span>Simple Marker</span></div></div>
        <div class="btns">
          <span class="btn"><svg viewBox="0 0 24 24"><path d="M8.500 1.500h6.500v7h7v6.500h-7v7H8.500v-7h-7V8.500h7z" fill="#fff" stroke="#4f9a55" stroke-width="1.300"/><path d="M11.750 4.500v15M4.500 11.750h15" stroke="#4f8a58" stroke-width="2.400"/></svg></span>
          <span class="btn dis"><svg viewBox="0 0 24 24"><path d="M12 3l10 16H2z" fill="#ccc" stroke="#888" stroke-width="1.300"/></svg></span>
          <span class="btn dis"><svg viewBox="0 0 24 24"><rect x="1.500" y="8" width="21" height="8" fill="#fff" stroke="#cc9a9e" stroke-width="1.300"/><path d="M5 12h14" stroke="#d49a9e" stroke-width="2"/></svg></span>
          <span class="btn dis"><svg viewBox="0 0 24 24"><path d="M12 20L2 4h20z" fill="#ccc" stroke="#888" stroke-width="1.300"/></svg></span>
          <span class="btn dis"><svg viewBox="0 0 24 24"><path d="M2 5v17h17" fill="none" stroke="#888" stroke-width="3"/><rect x="5" y="2" width="17" height="17" fill="#fff" stroke="#888" stroke-width="1.300"/><rect x="14" y="14" width="9" height="9" rx="2" fill="#a39a62"/></svg></span>
          <span class="btn dis"><svg viewBox="0 0 24 24"><path d="M8 6c0-6 10-6 10 1v5" fill="none" stroke="#888" stroke-width="2.200"/><rect x="3" y="11" width="18" height="12" rx="1" fill="#b8ae8a" stroke="#888"/></svg></span>
        </div>
      </div>
      <div class="formwrap">
        <div class="form">
          <div class="f unit"><label>Unit</label><div class="combo"><span>Millimeters</span><b class="dd"></b></div></div>
          <div class="f opac"><label>Opacity</label><div class="slider"><i></i><b></b></div><div class="spin"><span>100.0 %</span><i class="ud lim"></i></div></div>
          <div class="f color"><label>Color</label><div class="cbtn"><i></i></div><div class="cdrop"><b class="dd"></b></div></div>
          <div class="f size"><label>Size</label><div class="spin"><span>2.00000</span><i class="ud"></i></div><svg class="ddef"><use href="#ddef"/></svg></div>
          <div class="f rot"><label>Rotation</label><div class="spin"><span>0.00 °</span><i class="ud"></i></div><svg class="ddef"><use href="#ddef"/></svg></div>
          <div class="f fav"><div class="combo"><svg class="mag"><use href="#search"/></svg><span>Favorites</span><svg class="clr"><use href="#clear"/></svg><em><b class="dd"></b></em></div><svg class="sty"><use href="#style"/></svg></div>
          <div class="gallery">
            <div class="item"><svg width="26" height="26" viewBox="0 0 26 26"><circle cx="13" cy="13" r="10.300"/></svg><span>dot  black</span></div>
            <div class="item"><svg width="26" height="26" viewBox="0 0 26 26"><circle cx="13" cy="13" r="11.800" fill="#fff" stroke="#000" stroke-width="1.800"/></svg><span>dot  white</span></div>
            <div class="scroll"><i class="up"></i><i class="thumb"></i><i class="track"></i><i class="dn"></i></div>
          </div>
        </div>
        <div class="scroll outer"><i class="up"></i><i class="thumb"></i><i class="track"></i><i class="dn"></i></div>
      </div>
      <div class="lrend"><i class="ex right"></i><span>Layer Rendering</span></div>
      <div class="foot"><span class="btn orange"><svg><use href="#undo"/></svg></span><span class="btn green"><svg><use href="#redo"/></svg></span><i class="cb"><svg><use href="#check"/></svg></i><span class="live">Live update</span><span class="btn apply">Apply</span></div>
    </div>
  </div>
  <div class="tabs"><span class="tab act">Layer Styling</span><span class="tab">Results Viewer</span><i></i></div>
</section>
</main>

<footer class="status">
  <div class="box locate"><svg class="mag"><use href="#search"/></svg><span>raster pixel</span><svg class="clr"><use href="#clear"/></svg></div>
  <label class="coordl">Coordinate</label><div class="box coord"><span>663474.2,816641.8</span></div>
  <svg class="mouse" viewBox="0 0 24 24"><ellipse cx="8" cy="7" rx="5" ry="7" transform="rotate(-25 8 7)" fill="#111"/><path d="M6 2l4 9M10 2l2 8" stroke="#fff" stroke-width="1.300"/><ellipse cx="14" cy="17" rx="7" ry="6" fill="#fff" stroke="#111" stroke-width="2.400"/><circle cx="14" cy="18" r="2.500" fill="#fff" stroke="#111" stroke-width="2"/><path d="M2 13l18-7M1 18l5-4M17 3l4-2" stroke="#111" stroke-dasharray="2 2" stroke-width="1.500"/></svg>
  <label class="scalel">Scale</label><div class="combo scale"><span>1:5649</span><em><b class="dd"></b></em></div>
  <svg class="lock" viewBox="0 0 18 23"><path d="M4 11V6.500a5 5 0 0 1 10 0V11" fill="none" stroke="#8a8a8a" stroke-width="2.600"/><rect width="18" height="12.500" y="10" rx="1.500" fill="#666"/></svg>
  <label class="magl">Magnifier</label><div class="spin magn"><span>100%</span><i class="ud"></i></div>
  <label class="rotl">Rotation</label><div class="spin rots"><span>0.0 °</span><i class="ud"></i></div>
  <i class="cb"><svg><use href="#check"/></svg></i><label class="renl">Render</label>
  <svg class="globe" viewBox="0 0 24 22"><path d="M12 1c8 0 10 5 11 8-1 3-6 12-11 12S2 12 1 9c1-3 3-8 11-8z" fill="#777"/><path d="M1 9h22M3.500 14h17M5 4.500h14M12 1v20M12 1C5 6 6 16 12 21M12 1c7 5 6 15 0 20" fill="none" stroke="#eee" stroke-width=".9"/></svg>
  <label class="epsg">EPSG:22992</label>
  <svg class="bubble" viewBox="0 0 24 23"><path d="M12 0c7 0 12 4 12 10 0 3-1.500 5-3 6.500l1 6-6-3C7 21 0 17 0 10 0 4 5 0 12 0z" fill="#666"/><g fill="#fff"><circle cx="6.500" cy="9.500" r="1.900"/><circle cx="12" cy="9.500" r="1.900"/><circle cx="17.500" cy="9.500" r="1.900"/></g></svg>
</footer>
<script src="map.js"></script>
</body>
</html>
```
FILE: styles.css
```css
* { box-sizing: border-box; }
html, body { margin: 0; height: 100%; }
body { display: flex; flex-direction: column; width: 1920px; height: 1033px; overflow: hidden; background: #efefef; color: #000; font: 17px/1 "Open Sans", "Noto Sans", sans-serif; }
i, em { font-style: normal; }
b { font-weight: normal; }
svg { flex: none; display: block; }
.defs { position: absolute; width: 0; height: 0; }
.bold { font-weight: 700; }
.orange { color: #ea8136; }
.green { color: #7fbf8b; }

.titlebar { flex: none; height: 34px; background: #fff; display: flex; align-items: center; padding-left: 2px; }
.logo { width: 24px; height: 24px; }
.title { margin-left: 6px; flex: 1; font-size: 17.400px; line-height: 24px; white-space: nowrap; padding-top: 1px; }
.wc { margin: 0 28px 2px 0; }

.menubar { flex: none; height: 30px; border-bottom: 1px solid #d3d3d3; display: flex; align-items: center; gap: 17px; padding: 3px 0 0 13px; font-size: 16.850px; line-height: 20px; white-space: nowrap; }
u { text-underline-offset: 2px; text-decoration-thickness: 1px; }

.toolbar { flex: none; height: 43px; display: flex; align-items: center; background: linear-gradient(#fafafa, #ededed); border-bottom: 1px solid #b8b8b8; }
.toolbar svg { width: 33px; height: 24px; padding: 0 4.500px; }
.toolbar .on { width: 33px; height: 31px; border: 1px solid #a2a2a2; border-radius: 3px; background: #dadada; display: flex; align-items: center; }
.toolbar .on svg { margin-left: -1px; }
.off { opacity: .38; filter: grayscale(.7); }
.grip { flex: none; width: 24px; height: 17px; background: radial-gradient(circle at .5px .5px, #a8a8a8 .6px, transparent .9px) 0 0 / 3px 3px content-box; padding: 0 6px 0 13px; }
.toolbar .grip:first-child { margin-left: -5.500px; }
.sep { flex: none; width: 10px; height: 23px; background: linear-gradient(#ccc, #ccc) 5px 0 / 1px 100% no-repeat; }
.dd { flex: none; width: 17px; height: 6px; display: block; }
.dd::before { content: ""; display: block; width: 0; margin: 0 auto; border: 5.500px solid transparent; border-top: 6px solid #555; border-bottom: 0; }
.dd.dim { opacity: .55; }
.toolbar.third { height: 42px; }
.third .dd { width: 18px; }

main { flex: 1; min-height: 0; display: flex; }
.layers { width: 573px; display: flex; flex-direction: column; }
.dockhead { flex: none; height: 25px; display: flex; align-items: center; gap: 3px; padding: 3px 2px 0 3px; }
.dockhead span { flex: 1; line-height: 22px; margin-top: -1px; }
.dockhead svg { width: 12px; height: 12px; margin-bottom: 5px; }
.ltools { flex: none; height: 33px; display: flex; align-items: center; padding: 0 0 4px 6px; }
.ltools > svg { width: 25px; height: 17px; padding: 0 3px; }
.ltools .on { width: 24px; height: 23px; border: 1px solid #aaa; border-radius: 3px; background: #dcdcdc; display: grid; place-items: center; }
.ltools .on svg { width: 16px; height: 16px; }
.ltools .dd { width: 18px; }

.treebox { flex: 1; min-height: 0; display: flex; border: 1px solid #b6b6b6; background: #fff; width: 572px; margin-top: -1px; }
.tree { flex: 1; overflow: hidden; }
.row { height: 27px; display: flex; align-items: center; }
.row.sub { padding-left: 30px; }
.row.current { background: #efefef; }
.ex { flex: none; width: 33px; height: 12px; display: grid; place-items: center; }
.ex.down::before { content: ""; border: 5.500px solid transparent; border-top: 6px solid #555; border-bottom: 0; margin-left: -3px; }
.ex.right::before { content: ""; border: 6px solid transparent; border-left: 6px solid #555; border-right: 0; margin-left: -4px; }
.cb { flex: none; width: 21px; height: 21px; border: 1px solid #b0b0b0; background: #fff; display: block; }
.cb svg { width: 21px; height: 21px; margin: -1px; }
.ic { flex: none; width: 36px; display: flex; padding-left: 9px; }
.ic svg { width: 20px; height: 20px; }
.ic svg.grp { width: 23px; height: 24px; margin: -5px 0 0 -2px; }
.ic svg.pol { width: 24px; height: 19px; margin: -6px 0 0 -3px; }
.dot { flex: none; display: block; width: 12px; height: 13px; border: 1px solid #232323; border-radius: 50%; }
.ic .dot { margin: 0 0 1px 3px; }
.slate { background: #7d8b8f; } .brown { background: #91522d; } .tan { background: #beb297; } .red { background: #c93a38; } .gold { background: #e5b636; } .purple { background: #9b5fa5; border-color: #35436b; } .violet { background: #987db7; } .pink { background: #e15989; }
.sw { display: block; width: 22px; height: 22px; margin-left: -3px; border: 1px solid #9c4044; background: #fdfbfa; }
.sw.filled { background: #91522d; border-color: #3d2415; }
.lb { flex: 1; white-space: nowrap; line-height: 24px; padding-top: 3px; font-size: 16.900px; }
.lb.near { margin-left: -2px; }
.ghost { font-weight: 700; font-style: italic; color: #808080; font-size: 17px; letter-spacing: .46px; }
.ghost.wide { letter-spacing: .6px; }
.mem { flex: none; width: 23px; height: 24px; border: 1px solid #ddd; border-radius: 3px; background: #f7f7f7; display: grid; place-items: center; margin-right: 10px; }
.mem svg { width: 18px; height: 18px; }

.scroll { flex: none; width: 21px; display: flex; flex-direction: column; border-left: 1px solid #bdbdbd; }
.scroll i { display: grid; place-items: center; flex: none; }
.scroll .up, .scroll .dn { height: 21px; background: #fbfbfb; }
.scroll .up { border-bottom: 1px solid #bdbdbd; }
.scroll .dn { border-top: 1px solid #bdbdbd; }
.scroll .up::before { content: ""; border: 5.500px solid transparent; border-bottom: 6px solid #555; border-top: 0; }
.scroll .dn::before { content: ""; border: 5.500px solid transparent; border-top: 6px solid #555; border-bottom: 0; }
.scroll .thumb { height: 592px; background: linear-gradient(90deg, #f3f3f3, #fff); border-bottom: 1px solid #bdbdbd; }
.scroll .track { flex: 1; background: #e4e4e4; }

.split { flex: none; width: 8px; display: flex; align-items: center; justify-content: center; }
.split.right { width: 12px; }
.split i { width: 4px; height: 17px; background: radial-gradient(circle at .5px .5px, #a8a8a8 .6px, transparent .9px) 0 0 / 3px 3px; }
.canvas { flex: none; width: 826px; height: 805px; margin-top: 1px; border: 1px solid #b0b0b0; background: #fefdfc; }

.styling { flex: 1; display: flex; flex-direction: column; font: 15.400px/1 "DejaVu Sans Condensed", "DejaVu Sans", sans-serif; }
.styling .dockhead, .symtree { font: 16.900px/1 "Open Sans", "Noto Sans", sans-serif; }
.styling .dockhead { padding-left: 1px; }
.combo { display: flex; align-items: center; border: 1px solid #a8a8a8; border-radius: 3px; background: linear-gradient(#fff, #ececec); white-space: nowrap; }
.combo span { flex: 1; line-height: 22px; padding-top: 2px; }
.combo.layer { width: 498px; height: 32px; padding: 0 8px 0 7px; flex: none; }
.combo.layer svg { margin-right: 5px; }
.combo.layer, .combo.sym { font-size: 15.600px; }
.cols { display: flex; margin-top: 9px; height: 700px; gap: 3px; }
.side { width: 38px; display: flex; flex-direction: column; }
.first { height: 32px; padding: 5px 0 0 7px; }
.first svg, .dark svg { width: 23px; height: 23px; }
.dark { flex: 1; background: #5d5d5d; padding: 7px 0 0 4px; display: flex; flex-direction: column; gap: 9px; }
.dark svg.halo { width: 24px; height: 20px; margin: -2px 0 2px; }
.props { width: 457px; display: flex; flex-direction: column; }
.combo.sym { height: 32px; flex: none; padding: 0 8px 0 8px; }
.combo.sym svg { margin-right: 4px; }
.symrow { flex: none; height: 218px; border-bottom: 1px solid #999; display: flex; padding-top: 9px; }
.cross { margin-top: 49px; }
.symtree { width: 252px; height: 199px; margin-left: 9px; border: 1px solid #b0b0b0; background: #fff; }
.srow { height: 27px; display: flex; align-items: center; line-height: 22px; }
.srow.hd { background: #efefef; }
.srow .dot { margin: 0 11px 0 4px; }
.srow.ch .dot { margin: 0 10px 0 67px; }
.srow span { padding-top: 3px; }
.btns { margin: 10px 0 0 9px; display: grid; grid-template-columns: 39px 39px; grid-auto-rows: 33px; gap: 14px 9px; align-content: start; }
.btn { display: grid; place-items: center; border: 1px solid #a8a8a8; border-radius: 3px; background: linear-gradient(#fff, #ececec); }
.btn svg { width: 22px; height: 22px; }
.btn.dis { border-color: #ccc; }
.btn.dis svg { opacity: .4; }
.formwrap { height: 356px; margin-top: 11px; display: flex; flex: none; }
.form { width: 423px; height: 356px; overflow: hidden; }
.f { display: flex; align-items: center; }
.f label { flex: none; width: 53px; white-space: nowrap; padding-top: 2px; }
.f .combo { flex: 1; }
.unit .combo { height: 27px; padding: 0 8px 0 4px; }
.opac { height: 29px; }
.slider { width: 266px; display: flex; align-items: center; margin-top: -4px; }
.slider i { width: 246px; height: 8px; border: 1px solid #0d5496; border-radius: 2px 0 0 2px; background: #0a84ea; }
.slider b { width: 20px; height: 20px; border: 1px solid #aaa; border-radius: 3px; background: linear-gradient(#fff, #f0f0f0); }
.spin { display: flex; align-items: center; height: 28px; border: 1px solid #a8a8a8; border-radius: 3px; background: #fff; white-space: nowrap; padding-left: 4px; }
.spin span { flex: 1; padding-top: 3px; }
.ud { width: 21px; align-self: stretch; border-left: 1px solid #b5b5b5; background: linear-gradient(#fff, #ececec); display: flex; flex-direction: column; align-items: center; justify-content: center; gap: 5px; }
.ud::before { content: ""; border: 5.500px solid transparent; border-bottom: 6px solid #555; border-top: 0; }
.ud::after { content: ""; border: 5.500px solid transparent; border-top: 6px solid #555; border-bottom: 0; }
.ud.lim::before { opacity: .5; }
.opac .spin { width: 100px; margin-left: 4px; height: 27px; }
.cbtn { width: 351px; height: 31px; border: 1px solid #a8a8a8; border-radius: 3px; background: #fbfbfb; padding: 2px 4px; }
.cbtn i { display: block; height: 25px; border-radius: 3px; background: #e15989; }
.cdrop { width: 18px; height: 31px; margin-left: 1px; border: 1px solid #a8a8a8; border-radius: 3px; background: linear-gradient(#fff, #ececec); display: grid; place-items: center; }
.size { margin-top: 8px; }
.size label { margin-top: -5px; }
.rot { margin-top: 15px; padding-bottom: 7px; border-bottom: 1px solid #999; }
.size label, .rot label { width: 68px; }
.size .spin, .rot .spin { width: 308px; }
.ddef { width: 32px; height: 24px; margin-left: 13px; }
.fav { margin-top: 8px; }
.fav .combo { flex: none; width: 385px; height: 28px; background: #fff; padding-left: 10px; }
.mag { width: 13px; height: 13px; margin-right: 6px; }
.clr { width: 13px; height: 11px; margin-right: 8px; }
.combo em { width: 30px; align-self: stretch; background: linear-gradient(#fff, #ececec); display: grid; place-items: center; }
.sty { width: 22px; height: 22px; margin-left: 11px; }
.gallery { margin-top: 5px; height: 160px; border: 1px solid #b0b0b0; background: #fff; display: flex; }
.gallery .item { width: 146px; padding-top: 54px; display: flex; flex-direction: column; align-items: center; margin-left: 2px; white-space: pre; font-size: 17px; }
.gallery .item + .item { margin-left: 0; }
.gallery .item span { margin-top: 56px; }
.gallery .scroll { margin-left: auto; height: 149px; }
.gallery .scroll .thumb { height: 40px; }
.outer { margin-left: 13px; }
.outer .thumb { height: 270px; }
.lrend { height: 52px; display: flex; align-items: center; padding-top: 5px; font-weight: 700; font-size: 15.600px; }
.lrend span { padding-top: 3px; }
.lrend .ex { width: 22px; }
.lrend .ex::before { margin: 0 4px 0 0; }
.foot { display: flex; align-items: center; height: 31px; }
.foot .btn { width: 32px; height: 31px; margin-right: 6px; }
.foot .cb { margin-left: auto; margin-right: 8px; }
.live { width: 93px; white-space: nowrap; padding-top: 3px; }
.foot .btn.apply { width: 80px; margin-right: 0; padding-top: 3px; }
.tabs { display: flex; margin: 4px 0 0 -3px; height: 35px; }
.tab { height: 32px; margin-top: 1px; width: 139px; background: #dcdcdc; border: 1px solid #b5b5b5; border-left: 0; border-radius: 0 0 3px 3px; display: grid; place-items: center; white-space: nowrap; padding-top: 3px; }
.tab.act { height: 35px; margin-top: 0; width: 127px; background: #f7f7f7; border: 1px solid #b0b0b0; border-top: 0; }
.tabs > i { flex: 1; height: 2px; border-bottom: 1px solid #b5b5b5; }

.status { flex: none; height: 35px; display: flex; align-items: center; padding: 2px 7px 0 4px; white-space: nowrap; font: 15.400px/1 "DejaVu Sans Condensed", "DejaVu Sans", sans-serif; }
.status label, .box span { padding-top: 3px; }
.box { display: flex; align-items: center; height: 27px; border: 1px solid #a8a8a8; border-radius: 3px; background: #fff; padding-left: 6px; }
.locate { width: 291px; padding-left: 9px; margin-right: 530px; }
.locate .mag { margin-right: 7px; }
.locate span { flex: 1; letter-spacing: -.3px; }
.coordl { width: 80px; }
.coord { width: 156px; }
.mouse { width: 24px; height: 24px; margin: 0 12px 0 5px; }
.scalel { width: 39px; }
.scale { width: 113px; height: 27px; background: #fff; padding-left: 4px; }
.lock { width: 18px; height: 23px; margin: 0 10px 0 14px; }
.magl { width: 68px; }
.magn { width: 104px; margin-right: 10px; }
.rotl { width: 68px; }
.rots { width: 100px; margin-right: 7px; }
.status .cb { margin-right: 8px; }
.renl { width: 67px; }
.globe { width: 24px; height: 22px; margin-right: 4px; }
.epsg { width: 112px; }
.bubble { width: 24px; height: 23px; margin-top: -1px; }
```
FILE: map.js
```js
// Pixel edges and centres of the population grid, in window coordinates.
const colEdge = [573, 601, 629, 657, 686, 714, 742, 770, 799, 827, 855, 883, 912, 939, 967, 995, 1024, 1052, 1080, 1108, 1137, 1165, 1193, 1221, 1250, 1278, 1306, 1334, 1362, 1391, 1419];
const colMid = [587, 615, 643, 671, 699, 728, 756, 784, 812, 841, 869, 897, 925, 953, 982, 1010, 1038, 1066, 1094, 1123, 1151, 1179, 1207, 1236, 1264, 1292, 1320, 1348, 1377, 1405];
const rowEdge = [189, 217, 245, 273, 301, 330, 358, 386, 414, 443, 471, 499, 527, 556, 584, 612, 640, 669, 697, 725, 753, 782, 810, 838, 866, 895, 923, 951, 979, 1008];
const rowMid = [204, 232, 260, 288, 316, 345, 373, 401, 429, 458, 486, 514, 542, 570, 599, 627, 655, 683, 711, 740, 768, 796, 824, 852, 881, 909, 937, 965, 994];

// Occupied cells per row: first list is the western tile (0-12), second the eastern one (0-16).
const rows = [
  [[], [0, 4, 6, 10, 11, 12, 13, 14, 15, 16]],
  [[6, 11, 12], [0, 1, 2, 4, 6, 10, 11, 12, 13, 14, 15, 16]],
  [[12], [2, 3, 4, 5, 6, 10, 11, 13, 15, 16]],
  [[3, 5, 6, 8, 11, 12], [0, 2, 3, 4, 5, 6, 12, 15]],
  [[0], [2, 7, 10, 13]],
  [[5, 6, 8, 9, 10, 11, 12], [0, 1, 6, 7, 11, 14]],
  [[6, 9, 10], [0, 3, 4, 5, 6, 9, 11, 14, 15]],
  [[3, 4, 6, 7, 8, 10, 11], [0, 1, 2, 4, 6, 7, 15]],
  [[4, 6, 7, 8, 9, 10, 11, 12], [1, 2, 5, 6, 7, 15]],
  [[2, 4, 6, 7, 9], [0, 1, 3, 4, 5, 8, 15, 16]],
  [[4, 5, 8, 9], [1, 4, 5, 6, 8, 15]],
  [[4, 5, 6, 7, 11, 12], [5, 6, 7, 8, 14]],
  [[0, 1, 2, 6, 7, 11, 12], [5, 6, 7, 8, 14, 16]],
  [[9, 12], [0, 4, 5, 8, 14, 15, 16]],
  [[4, 5], [0, 4, 5, 9, 14, 15]],
  [[1, 6, 10, 11, 12], [3, 4, 5, 9, 11, 12, 16]],
  [[0, 1, 2, 7, 8, 10, 11], [0, 4, 6, 7, 9, 10, 13, 15]],
  [[3, 4, 5], [1, 4, 10, 14, 16]],
  [[2, 3, 4, 8, 9, 10], [5, 8, 9, 10, 12, 14, 16]],
  [[2, 4, 9, 12], [0, 2, 3, 5, 6, 10, 12, 13, 14, 16]],
  [[1, 3, 5, 9], [3, 4, 5, 6, 7, 8, 9, 11, 12, 13, 14, 16]],
  [[0, 2, 6, 8, 9, 10], [4, 6, 9, 13, 14, 15]],
  [[0, 2, 4, 5, 8, 9, 10], [1, 2, 5, 7, 8, 10, 12, 13, 14]],
  [[0, 2, 4, 5, 8, 9, 10], [1, 2, 10]],
  [[3, 5, 9], [0, 10]],
  [[0, 1, 2, 3, 4, 9, 10], [2, 3, 9, 11]],
  [[0, 1, 2, 4, 7], [1, 5, 6, 7, 10, 11, 14]],
  [[3, 5, 10, 11], [5, 7, 10, 11, 12, 13, 14, 15, 16]],
  [[2, 3, 4, 5, 8, 9], [13, 16]]
];

const view = document.getElementById("mapview");
function add(name, attrs) {
  const el = document.createElementNS("http://www.w3.org/2000/svg", name);
  for (const key in attrs) el.setAttribute(key, attrs[key]);
  view.appendChild(el);
}
function cell(c, r, fill) {
  add("rect", { x: colEdge[c], y: rowEdge[r], width: colEdge[c + 1] - colEdge[c], height: rowEdge[r + 1] - rowEdge[r], fill: fill, "shape-rendering": "crispEdges" });
}
rows.forEach(function (row, r) {
  row[0].forEach(function (c) {
    cell(c, r, "#ebf8fa");
    add("circle", { cx: colMid[c] + 0.1, cy: rowMid[r] + 0.1, r: 5.5, fill: "#e15989", stroke: "#232323", "stroke-width": 1.1 });
  });
  row[1].forEach(function (c) {
    cell(c + 13, r, "#440154");
    add("circle", { cx: colMid[c + 13] + 0.1, cy: rowMid[r] + 0.1, r: 5.3, fill: "#e5b636", stroke: "#3a3312", "stroke-width": 0.9 });
  });
});
```
